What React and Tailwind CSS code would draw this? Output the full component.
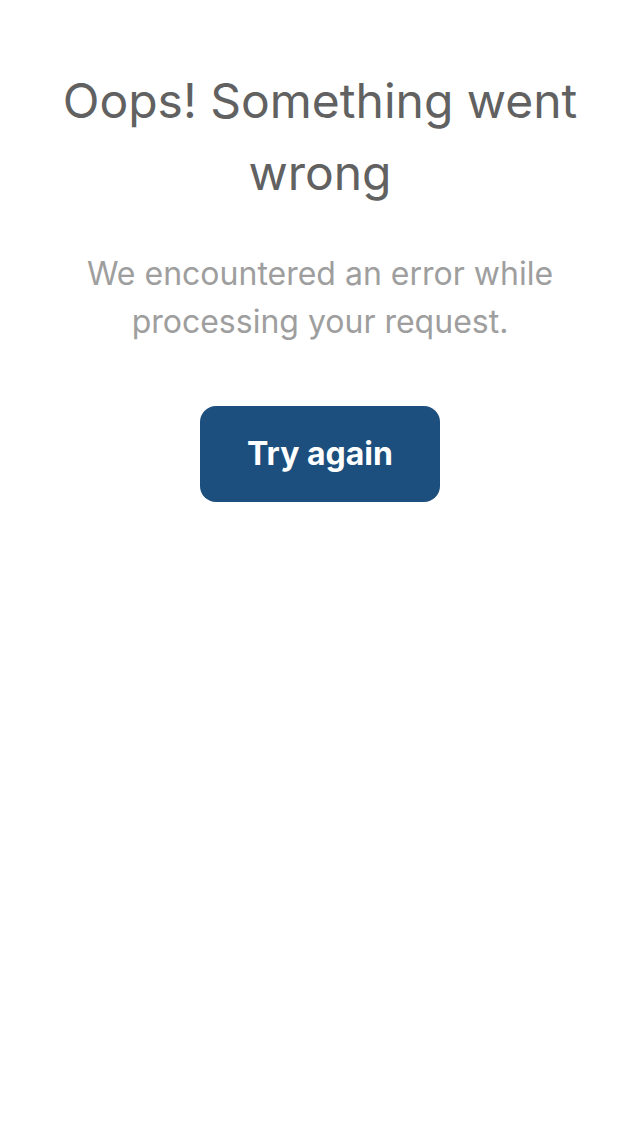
export default function App() {
  return (
    <div className="min-h-screen bg-white px-8 pt-[65px] flex flex-col items-center text-center font-['Inter',sans-serif]">
      <h1 className="text-[48px] leading-[72px] font-normal text-[#616161]">
        Oops! Something went wrong
      </h1>
      <p className="mt-[41px] text-[32px] leading-[48px] text-[#9e9e9e] max-w-[480px]">
        We encountered an error while processing your request.
      </p>
      <button className="mt-[60px] w-[240px] h-[96px] rounded-2xl bg-[#1c4f7e] text-white text-[32px] leading-[48px] font-bold">
        Try again
      </button>
    </div>
  )
}
